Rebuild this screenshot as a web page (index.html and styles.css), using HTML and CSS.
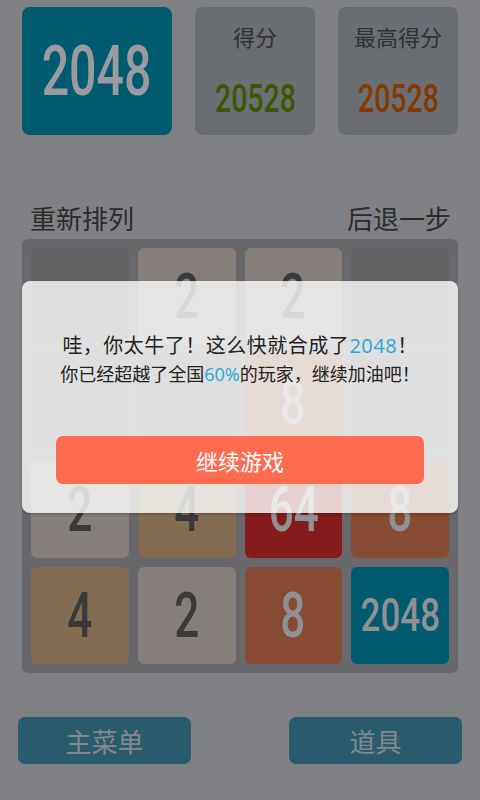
FILE: index.html
```html
<!DOCTYPE html>
<html lang="zh-CN">
<head>
  <meta charset="UTF-8" />
  <meta name="viewport" content="width=device-width, initial-scale=1.0" />
  <title>2048</title>
  <link rel="stylesheet" href="styles.css">
</head>
<body>

  <div class="app">
    <!-- Logo + scores -->
    <div class="header">
      <div class="logo"><span class="num">2048</span></div>
      <div class="score-box">
        <div class="label">得分</div>
        <div class="value"><span class="num score">20528</span></div>
      </div>
      <div class="score-box">
        <div class="label">最高得分</div>
        <div class="value"><span class="num best">20528</span></div>
      </div>
    </div>

    <div class="toolbar">
      <span>重新排列</span>
      <span>后退一步</span>
    </div>

    <!-- Board -->
    <div class="board">
      <div class="tile"></div>
      <div class="tile t2"><span class="num">2</span></div>
      <div class="tile t2"><span class="num">2</span></div>
      <div class="tile"></div>

      <div class="tile"></div>
      <div class="tile"></div>
      <div class="tile t8"><span class="num">8</span></div>
      <div class="tile"></div>

      <div class="tile t2"><span class="num">2</span></div>
      <div class="tile t4"><span class="num">4</span></div>
      <div class="tile t64"><span class="num">64</span></div>
      <div class="tile t8"><span class="num">8</span></div>

      <div class="tile t4"><span class="num">4</span></div>
      <div class="tile t2"><span class="num">2</span></div>
      <div class="tile t8"><span class="num">8</span></div>
      <div class="tile t2048"><span class="num">2048</span></div>
    </div>

    <div class="footer">
      <button class="menu-btn">主菜单</button>
      <button class="menu-btn">道具</button>
    </div>
  </div>

  <!-- Win dialog -->
  <div class="dialog">
    <p class="msg-main">哇，你太牛了！这么快就合成了<em>2048</em>！</p>
    <p class="msg-sub">你已经超越了全国<em>60%</em>的玩家，继续加油吧！</p>
    <button class="continue-btn">继续游戏</button>
  </div>

</body>
</html>
```

FILE: styles.css
```css
* { margin: 0; padding: 0; box-sizing: border-box; }
body, html {
  width: 480px;
  height: 800px;
  overflow: hidden;
  background: #808185;
  font-family: "Noto Sans CJK SC", "Noto Sans", sans-serif;
}
.app {
  position: relative;
  height: 100%;
}
/* tall narrow digits */
.num {
  font-family: Roboto, "Liberation Sans", sans-serif;
  font-weight: 500;
  display: inline-block;
  transform: scaleX(0.7);
}

.header {
  display: flex;
  gap: 23px;
  padding: 7px 22px 0;
}
.logo {
  width: 150px;
  height: 128px;
  background: #005a70;
  border-radius: 8px;
  display: flex;
  justify-content: center;
  align-items: center;
  color: #9a9aa0;
  font-size: 70px;
}
.logo .num { transform: scaleX(0.69); }
.score-box {
  width: 120px;
  height: 128px;
  background: #6a6e72;
  border-radius: 8px;
  text-align: center;
}
.score-box .label {
  margin-top: 14px;
  font-size: 22px;
  line-height: 30px;
  color: #2f3133;
}
.score-box .value {
  margin-top: 21px;
  font-size: 39px;
  line-height: 46px;
}
.score-box .num { transform: scaleX(0.73); }
.score { color: #3b5700; }
.best { color: #873800; }

.toolbar {
  display: flex;
  justify-content: space-between;
  padding: 0 29px 0 30px;
  margin-top: 68px;
  font-size: 26px;
  line-height: 30px;
  color: #2b2b2d;
}

.board {
  margin: 6px 22px 0;
  padding: 9px;
  background: #68676b;
  border-radius: 6px;
  display: grid;
  grid-template-columns: repeat(4, minmax(0, 1fr));
  grid-auto-rows: 97px;
  gap: 9.3px 9px;
}
.tile {
  background: #616163;
  border-radius: 6px;
  display: flex;
  justify-content: center;
  align-items: center;
  font-size: 63px;
  color: #3a3a3a;
}
.t2 { background: #857e7b; }
.t4 { background: #836d52; }
.t8 { background: #874a33; color: #919195; }
.t64 { background: #851c1b; color: #919195; }
.t2048 { background: #005a70; color: #919195; font-size: 46px; }
.t2048 .num { transform: scaleX(0.76); }

.footer {
  display: flex;
  justify-content: space-between;
  padding: 0 18px;
  margin-top: 44px;
}
.menu-btn {
  width: 173px;
  height: 47px;
  border: none;
  border-radius: 7px;
  background: #285c6c;
  color: #85878b;
  font-family: inherit;
  font-size: 26px;
}

.dialog {
  position: absolute;
  left: 22px;
  top: 281px;
  width: 436px;
  height: 232px;
  background: rgba(255, 255, 255, 0.8);
  border-radius: 8px;
  box-shadow: 0 1px 3px rgba(0, 0, 0, 0.25);
  text-align: center;
  color: #222;
  padding-top: 50px;
}
.dialog em {
  font-style: normal;
  font-family: "Open Sans", "Noto Sans", sans-serif;
  color: #1eaad6;
}
.msg-main {
  font-size: 20px;
  line-height: 28px;
  letter-spacing: 0.5px;
}
.msg-sub {
  font-size: 18px;
  line-height: 26px;
}
.continue-btn {
  display: block;
  margin: 49px auto 0;
  width: 368px;
  height: 48px;
  border: none;
  border-radius: 7px;
  background: #ff6c4f;
  color: #fff;
  font-family: inherit;
  font-size: 22px;
}
```
